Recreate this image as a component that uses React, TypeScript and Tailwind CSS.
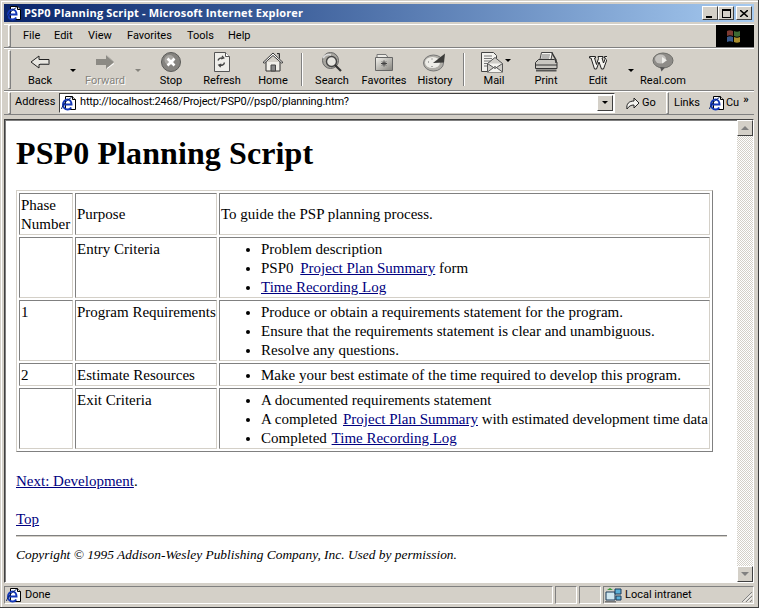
import React from 'react';

const ui = 'font-["Roboto",sans-serif] text-[11px] text-black';

const IeIcon = () => (
  <svg width="16" height="16" viewBox="0 0 16 16" className="shrink-0">
    <path d="M4.500 1.500h7l3 3v10h-10z" fill="#fff" stroke="#000" />
    <path d="M11.500 1.500v3h3" fill="#d4d0c8" stroke="#000" />
    <path d="M2.500 9.500h8c0-3-1.800-5-4-5s-4.500 2-4.500 5 2 5 4.500 5c1.700 0 3-.8 3.700-2" fill="none" stroke="#1438b8" strokeWidth="2" />
    <path d="M0.500 14c1-4 5-9 10-11.500" fill="none" stroke="#0a246a" />
  </svg>
);

const BackIcon = () => (
  <svg width="22" height="20" viewBox="0 0 22 20">
    <path d="M2 10l8-6v3.500h10v5H10V16z" fill="#e8e6e0" stroke="#222" />
    <path d="M11 12h9" stroke="#777" />
  </svg>
);

const ForwardIcon = () => (
  <svg width="22" height="20" viewBox="0 0 22 20">
    <path d="M20 10l-8-7v4H2v6h10v4z" fill="#8c8a84" />
    <path d="M12 3l8 7" stroke="#b4b2ac" />
    <path d="M13 16.500l7-5" stroke="#fff" />
  </svg>
);

const StopIcon = () => (
  <svg width="22" height="22" viewBox="0 0 22 22">
    <circle cx="11" cy="11" r="9.500" fill="#85837f" stroke="#5a5a58" />
    <circle cx="9.500" cy="9" r="5" fill="#a8a6a2" />
    <path d="M7.500 7.500l7 7M14.500 7.500l-7 7" stroke="#fff" strokeWidth="2.600" />
  </svg>
);

const RefreshIcon = () => (
  <svg width="20" height="22" viewBox="0 0 20 22">
    <path d="M2.500 1.500h11l4 4v15h-15z" fill="#efeeea" stroke="#555" />
    <path d="M13.500 1.500v4h4" fill="#fff" stroke="#555" />
    <path d="M6 9.500c.6-2 2.600-3 4.500-2.400M10 4.800l1.800 2.200-2.600 1" fill="none" stroke="#444" strokeWidth="1.300" />
    <path d="M12.500 11.500c-.5 2.200-2.500 3.300-4.500 2.700M8.700 16.200L6.800 14l2.600-1" fill="none" stroke="#444" strokeWidth="1.300" />
  </svg>
);

const HomeIcon = () => (
  <svg width="22" height="22" viewBox="0 0 22 22">
    <path d="M4 11v9h14v-9" fill="#f1efe9" stroke="#333" />
    <path d="M1 11.500L11 2l10 9.500-1.500.5L11 4.500 2.500 12z" fill="#fff" stroke="#333" />
    <path d="M15 2.500h2.500v5" fill="#999" stroke="#333" />
    <path d="M9 14h4.500v6H9z" fill="#888" stroke="#444" />
  </svg>
);

const SearchIcon = () => (
  <svg width="22" height="22" viewBox="0 0 22 22">
    <circle cx="9.500" cy="9.500" r="8" fill="#a8a6a0" stroke="#666" />
    <circle cx="10.500" cy="10.500" r="5" fill="#e6e5e0" stroke="#444" strokeWidth="1.400" />
    <path d="M14 14l6 6" stroke="#333" strokeWidth="2.200" />
    <path d="M2 7c2-3 5-4 8-3" stroke="#ddd" fill="none" strokeWidth="1.500" />
  </svg>
);

const FavoritesIcon = () => (
  <svg width="22" height="20" viewBox="0 0 22 20">
    <defs>
      <linearGradient id="favFill" x1="0" y1="0" x2="1" y2="1">
        <stop offset="0" stopColor="#f4f3ee" />
        <stop offset="1" stopColor="#85837d" />
      </linearGradient>
    </defs>
    <path d="M4 5V2.500h9l2 3" fill="#ecebe6" stroke="#777" />
    <path d="M2.500 5.500h17v13h-17z" fill="url(#favFill)" stroke="#666" />
    <path d="M11 8.500v6M8 11.500h6M9 9.500l4 4M13 9.500l-4 4" stroke="#444" />
  </svg>
);

const HistoryIcon = () => (
  <svg width="24" height="20" viewBox="0 0 24 20">
    <ellipse cx="10.500" cy="11" rx="10" ry="8" fill="#b0aea8" stroke="#777" />
    <ellipse cx="9.500" cy="10.500" rx="7.500" ry="5.500" fill="#eeede8" />
    <path d="M10 11L22 1.500l-1 9z" fill="#3c3c3a" />
    <path d="M5 10h1M9 6.500v1M9 14v1" stroke="#666" />
  </svg>
);

const MailIcon = () => (
  <svg width="24" height="22" viewBox="0 0 24 22">
    <path d="M1.500 1.500h12l3 3v8h-6v8h-9z" fill="#f3f2ee" stroke="#444" />
    <path d="M4 5h8M4 7.500h8M4 10h7M4 12.500h4M4 15h4" stroke="#777" />
    <path d="M7.500 12.500l7.500-6 7.500 6v8.500h-15z" fill="#cfcdc8" stroke="#555" />
    <path d="M7.500 21l7.500-5.500 7.500 5.500M7.500 12.500l7.500 5 7.500-5" fill="#f5f4f0" stroke="#555" />
  </svg>
);

const PrintIcon = () => (
  <svg width="24" height="22" viewBox="0 0 24 22">
    <path d="M7.500 1.500h11l-2 9h-11z" fill="#f5f4f0" stroke="#444" />
    <path d="M8 4h8M7.500 6h8M7 8h8" stroke="#777" />
    <path d="M1.500 11.500l3-3h16l2.500 3v6h-21.500z" fill="#c9c7c1" stroke="#333" />
    <path d="M1.500 14h21.500" stroke="#333" />
    <path d="M2 18.500h20.500v2H2z" fill="#555" />
    <path d="M18 2l4 7v3" fill="none" stroke="#333" strokeWidth="1.500" />
  </svg>
);

// Word style W used on the Edit button, drawn as a mark rather than a label
const EditIcon = () => (
  <svg width="18" height="15" viewBox="0 0 18 15">
    <path d="M.5 1.500h6v1.500h-1l2 6.500 2-6-.5-2h5v1.500h-1l1.500 5 2-5h-1v-1.500h3.500l-.5 1.500-4 11h-2l-2.500-7-2.500 7h-2L2 3H.5z" fill="#f4f3ef" stroke="#222" />
  </svg>
);

const RealIcon = () => (
  <svg width="22" height="20" viewBox="0 0 22 20">
    <ellipse cx="11" cy="8.500" rx="10" ry="7.500" fill="#8e8c88" stroke="#6e6e6a" />
    <ellipse cx="8.500" cy="7" rx="5.500" ry="4.500" fill="#c4c2be" />
    <path d="M8 15l1.500 4.500L13 15.500z" fill="#555" />
    <path d="M10 5v6.500l5-3.200z" fill="#eeeeea" />
  </svg>
);

const DropArrow = ({ muted = false }: { muted?: boolean }) => (
  <div
    className={`w-0 h-0 border-x-[3px] border-x-transparent border-t-[3px] ${muted ? 'border-t-[#85837d]' : 'border-t-black'}`}
  />
);

const Grip = () => <div className="w-[3px] self-stretch border border-t-white border-l-white border-r-[#808080] border-b-[#808080]" />;

const ToolSep = () => (
  <div className="w-2 flex justify-center py-[3px]">
    <div className="w-[2px] h-full border-l border-l-[#808080] border-r border-r-white" />
  </div>
);

const ToolButton = ({ label, width, children, disabled = false }: { label: string; width: string; children: React.ReactNode; disabled?: boolean }) => (
  <div className={`${width} flex flex-col items-center`}>
    <div className="h-[24px] flex items-center justify-center">{children}</div>
    <span className={`leading-[13px] ${disabled ? 'text-[#85837d] [text-shadow:1px_1px_0_#fff]' : ''}`}>{label}</span>
  </div>
);

const ToolDrop = ({ width, muted = false }: { width: string; muted?: boolean }) => (
  <div className={`${width} flex justify-center pt-[19px]`}>
    <DropArrow muted={muted} />
  </div>
);

const Bar = ({ className = '', children }: { className?: string; children: React.ReactNode }) => (
  <div className={`border-t border-t-white border-b border-b-[#808080] ${className}`}>{children}</div>
);

const Link = ({ className = '', children }: { className?: string; children: React.ReactNode }) => (
  <a className={`text-[#000080] underline ${className}`}>{children}</a>
);

const Cell = ({ className = '', children }: { className?: string; children?: React.ReactNode }) => (
  <td className={`border border-t-[#808080] border-l-[#808080] border-r-[#d4d0c8] border-b-[#d4d0c8] px-px pt-[2px] pb-0 ${className}`}>{children}</td>
);

const Bullets = ({ items }: { items: React.ReactNode[] }) => (
  <ul className="list-disc pl-10 m-0">
    {items.map((item, i) => (
      <li key={i} className="whitespace-nowrap">{item}</li>
    ))}
  </ul>
);

const ScrollButton = ({ up = false }: { up?: boolean }) => (
  <div className="w-4 h-4 bg-[#d4d0c8] border border-t-white border-l-white border-r-[#404040] border-b-[#404040] flex items-center justify-center">
    <div
      className={`w-0 h-0 border-x-[4px] border-x-transparent ${up ? 'border-b-[4px] border-b-[#808080]' : 'border-t-[4px] border-t-[#808080]'}`}
    />
  </div>
);

const CaptionButton = ({ children, className = '' }: { children: React.ReactNode; className?: string }) => (
  <div className={`w-4 h-[14px] bg-[#d4d0c8] border border-t-white border-l-white border-r-[#404040] border-b-[#404040] flex items-center justify-center ${className}`}>
    {children}
  </div>
);

const App: React.FC = () => {
  return (
    <div className={`w-[759px] h-[608px] overflow-hidden bg-[#d4d0c8] flex flex-col p-[4px] pb-[3px] border-r border-b border-r-[#404040] border-b-[#404040] shadow-[inset_1px_1px_0_#d4d0c8,inset_2px_2px_0_#ffffff] ${ui}`}>
      {/* title bar */}
      <div className="h-[18px] shrink-0 flex items-center bg-gradient-to-r from-[#0a246a] to-[#a6caf0] pl-[2px] pr-[2px]">
        <IeIcon />
        <span className="ml-[2px] font-['Open_Sans',sans-serif] font-bold text-white text-[11px] tracking-[0.16px]">PSP0 Planning Script - Microsoft Internet Explorer</span>
        <div className="ml-auto flex items-center">
          <CaptionButton>
            <div className="w-[6px] h-[2px] bg-black mt-[7px] -ml-[2px]" />
          </CaptionButton>
          <CaptionButton>
            <div className="w-[9px] h-[9px] border border-black border-t-2" />
          </CaptionButton>
          <CaptionButton className="ml-[2px]">
            <svg width="8" height="7" viewBox="0 0 8 7">
              <path d="M0 0l8 7M8 0L0 7" stroke="#000" strokeWidth="1.500" />
            </svg>
          </CaptionButton>
        </div>
      </div>

      {/* menu bar */}
      <Bar className="mt-[2px] h-[24px] shrink-0 flex items-center pl-[4px] relative">
        <Grip />
        <div className="flex items-center ml-[4px] pt-px h-full">
          <span className="w-[31px] pl-[8px]">File</span>
          <span className="w-[34px] pl-[8px]">Edit</span>
          <span className="w-[39px] pl-[8px]">View</span>
          <span className="w-[60px] pl-[8px]">Favorites</span>
          <span className="w-[41px] pl-[8px]">Tools</span>
          <span className="pl-[8px]">Help</span>
        </div>
        <div className="ml-auto w-[38px] h-[22px] bg-black flex items-center justify-center">
          <svg width="18" height="16" viewBox="0 0 18 16">
            <path d="M1 3c2-1 4-1 6 0v5c-2-1-4-1-6 0z" fill="#7c3a32" />
            <path d="M8 3c2 1 4 1 6 0v5c-2 1-4 1-6 0z" fill="#3e6a34" />
            <path d="M1 9c2-1 4-1 6 0v5c-2-1-4-1-6 0z" fill="#3a5a8c" />
            <path d="M8 9c2 1 4 1 6 0v5c-2 1-4 1-6 0z" fill="#a88c2c" />
          </svg>
        </div>
      </Bar>

      {/* standard buttons */}
      <Bar className="h-[43px] shrink-0 flex pl-[4px] py-[1px]">
        <Grip />
        <div className="flex ml-[3px] h-full">
          <ToolButton label="Back" width="w-[52px]"><BackIcon /></ToolButton>
          <ToolDrop width="w-[14px]" />
          <ToolButton label="Forward" width="w-[50px]" disabled><ForwardIcon /></ToolButton>
          <ToolDrop width="w-[16px]" muted />
          <ToolButton label="Stop" width="w-[50px]"><StopIcon /></ToolButton>
          <ToolButton label="Refresh" width="w-[52px]"><RefreshIcon /></ToolButton>
          <ToolButton label="Home" width="w-[50px]"><HomeIcon /></ToolButton>
          <ToolSep />
          <ToolButton label="Search" width="w-[52px]"><SearchIcon /></ToolButton>
          <ToolButton label="Favorites" width="w-[52px]"><FavoritesIcon /></ToolButton>
          <ToolButton label="History" width="w-[50px]"><HistoryIcon /></ToolButton>
          <ToolSep />
          <ToolButton label="Mail" width="w-[52px]">
            <div className="relative -ml-[4px]">
              <MailIcon />
              <div className="absolute -right-[7px] top-[8px]"><DropArrow /></div>
            </div>
          </ToolButton>
          <ToolButton label="Print" width="w-[52px]"><PrintIcon /></ToolButton>
          <ToolButton label="Edit" width="w-[52px]"><EditIcon /></ToolButton>
          <ToolDrop width="w-[14px]" />
          <ToolButton label="Real.com" width="w-[50px]"><RealIcon /></ToolButton>
        </div>
      </Bar>

      {/* address bar */}
      <Bar className="h-[24px] shrink-0 flex items-center pl-[4px] pr-[2px]">
        <Grip />
        <span className="ml-[4px] w-[44px] -mt-px">Address</span>
        <div className="w-[556px] h-[20px] -mt-[1px] bg-white border border-t-[#404040] border-l-[#404040] border-r-white border-b-white flex items-center pl-[1px] pr-[1px]">
          <IeIcon />
          <span className="ml-[3px] tracking-[-0.18px]">http://localhost:2468/Project/PSP0//psp0/planning.htm?</span>
          <div className="ml-auto w-4 h-4 bg-[#d4d0c8] border border-t-white border-l-white border-r-[#404040] border-b-[#404040] flex items-center justify-center">
            <DropArrow />
          </div>
        </div>
        <div className="ml-[10px] flex items-center w-[41px]">
          <svg width="16" height="14" viewBox="0 0 16 14">
            <path d="M2 13c-1-5 2-8 7-8V2l5 5-5 5V9c-3 0-5 1-7 4z" fill="#f4f3ef" stroke="#222" />
          </svg>
          <span className="ml-px">Go</span>
        </div>
        <Grip />
        <span className="ml-[5px]">Links</span>
        <div className="ml-[9px]"><IeIcon /></div>
        <span className="ml-px">Cu</span>
        <span className="ml-[4px] -mt-[5px] font-bold">»</span>
      </Bar>

      {/* page frame */}
      <div className="mt-[4px] flex-1 min-h-0 flex border border-t-[#404040] border-l-[#404040] border-r-white border-b-white">
        <div className="flex-1 min-w-0 bg-white border-l border-t border-l-[#808080] border-t-[#808080] pl-[10px] overflow-hidden font-['Liberation_Serif',serif] text-[15px] leading-[19px] text-black">
          <h1 className="text-[32px] font-bold leading-[37px] mt-[14px] tracking-[0.1px]">PSP0 Planning Script</h1>
          <table className="mt-[18px] w-[697px] table-fixed border-separate border-spacing-[2px] border border-t-[#d4d0c8] border-l-[#d4d0c8] border-r-[#808080] border-b-[#808080]">
            <colgroup>
              <col className="w-[54px]" />
              <col className="w-[142px]" />
              <col />
            </colgroup>
            <tbody>
              <tr className="h-[41px]">
                <Cell>Phase Number</Cell>
                <Cell><div className="mb-[2px]">Purpose</div></Cell>
                <Cell><div className="mb-[2px]">To guide the PSP planning process.</div></Cell>
              </tr>
              <tr className="align-top">
                <Cell />
                <Cell>Entry Criteria</Cell>
                <Cell>
                  <Bullets items={[
                    'Problem description',
                    <>PSP0 <Link className="ml-[3px]">Project Plan Summary</Link> form</>,
                    <Link>Time Recording Log</Link>,
                  ]} />
                </Cell>
              </tr>
              <tr className="align-top">
                <Cell>1</Cell>
                <Cell className="whitespace-nowrap">Program Requirements</Cell>
                <Cell>
                  <Bullets items={[
                    'Produce or obtain a requirements statement for the program.',
                    'Ensure that the requirements statement is clear and unambiguous.',
                    'Resolve any questions.',
                  ]} />
                </Cell>
              </tr>
              <tr className="align-top">
                <Cell>2</Cell>
                <Cell>Estimate Resources</Cell>
                <Cell>
                  <Bullets items={['Make your best estimate of the time required to develop this program.']} />
                </Cell>
              </tr>
              <tr className="align-top">
                <Cell />
                <Cell>Exit Criteria</Cell>
                <Cell>
                  <Bullets items={[
                    'A documented requirements statement',
                    <>A completed <Link className="ml-[2px]">Project Plan Summary</Link><span className="tracking-[-0.06px]"> with estimated development time data</span></>,
                    <>Completed <Link className="ml-px">Time Recording Log</Link></>,
                  ]} />
                </Cell>
              </tr>
            </tbody>
          </table>
          <p className="mt-[20px]"><Link>Next: Development</Link>.</p>
          <p className="mt-[19px]"><Link>Top</Link></p>
          <hr className="mt-[6px] w-[711px] border-t border-t-[#808080] border-b border-b-[#d4d0c8]" />
          <p className="mt-[8px] text-[13.4px] italic">Copyright © 1995 Addison-Wesley Publishing Company, Inc. Used by permission.</p>
        </div>
        <div className="w-4 shrink-0 flex flex-col bg-[repeating-conic-gradient(#d4d0c8_0_25%,#ffffff_0_50%)] bg-[length:2px_2px]">
          <ScrollButton up />
          <div className="flex-1" />
          <ScrollButton />
        </div>
      </div>

      {/* status bar */}
      <div className="mt-[3px] h-[18px] shrink-0 flex items-stretch gap-[2px]">
        <div className="w-[549px] flex items-center pl-[1px] border border-t-[#808080] border-l-[#808080] border-r-white border-b-white">
          <IeIcon />
          <span className="ml-[3px]">Done</span>
        </div>
        <div className="w-[22px] border border-t-[#808080] border-l-[#808080] border-r-white border-b-white" />
        <div className="w-[22px] border border-t-[#808080] border-l-[#808080] border-r-white border-b-white" />
        <div className="flex-1 flex items-center border border-t-[#808080] border-l-[#808080] border-r-white border-b-white relative">
          <svg width="18" height="16" viewBox="0 0 18 16" className="shrink-0">
            <path d="M2 5h9v8H2z" fill="#cfe6f0" stroke="#1a3a5a" />
            <path d="M11 2h6v5h-6zM12 9h5v4h-5z" fill="#5bb0d8" stroke="#1a3a5a" />
            <path d="M1 14h11v1.500H1z" fill="#777" />
            <path d="M3 3l3-2 3 2z" fill="#3a9a3a" />
          </svg>
          <span className="ml-[3px]">Local intranet</span>
          <svg width="12" height="12" viewBox="0 0 12 12" className="absolute right-0 bottom-0">
            <path d="M11 1L1 11M11 5l-6 6M11 9l-2 2" stroke="#808080" />
            <path d="M11 2.500L2.500 11M11 6.500L6.500 11" stroke="#fff" />
          </svg>
        </div>
      </div>
    </div>
  );
};

export default App;
